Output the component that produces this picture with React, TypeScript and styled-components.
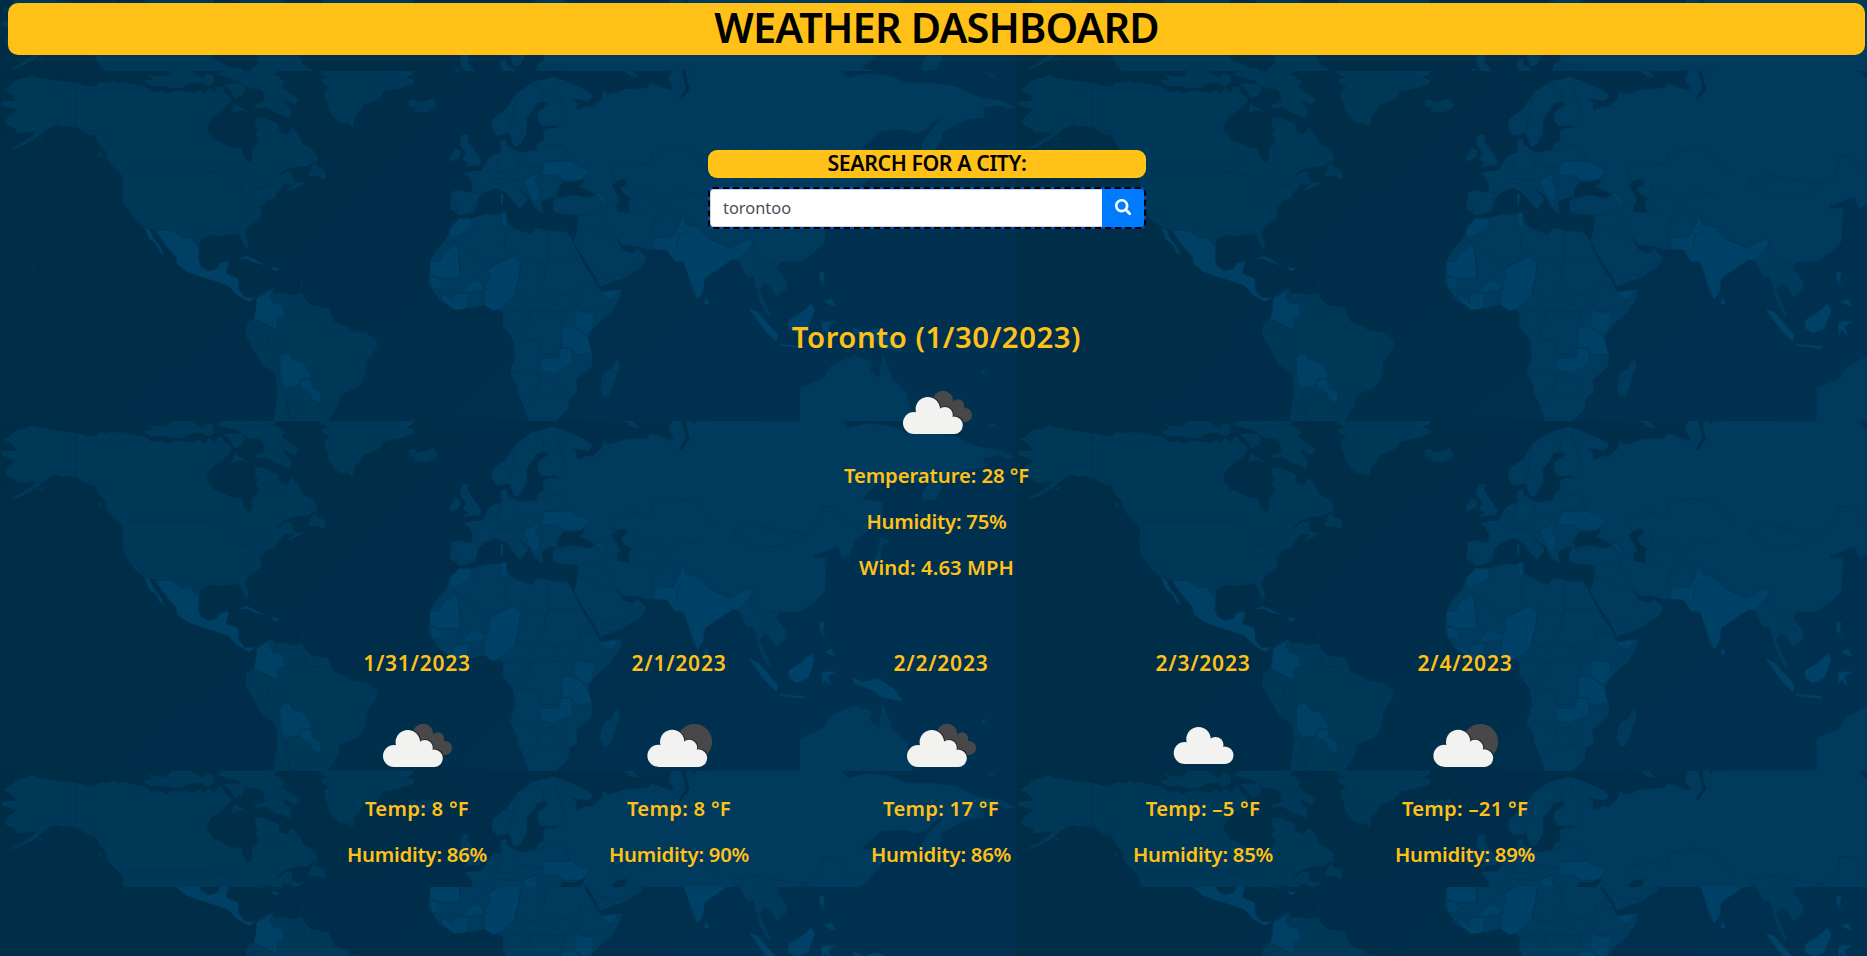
import React, { useId } from "react";
import styled, { createGlobalStyle } from "styled-components";
import { FaSearch } from "react-icons/fa";

const GlobalStyle = createGlobalStyle`
  * { box-sizing: border-box; }
  body { margin: 0; background: #002d48; }
`;

const GOLD = "#ffc117";
const DISPLAY = `"Noto Sans", "Open Sans", sans-serif`;

/* ---------- world map backdrop ---------- */

const TILE_W = 1016.5;
const TILE_H = 350;

const strips = [
  { y: 0, height: 71, from: 9 },
  { y: 71, height: 350, from: 0 },
  { y: 421, height: 350, from: 0 },
  { y: 771, height: 116, from: 0 },
  { y: 887, height: 69, from: 192 },
];

const americas = [
  "M10,88 L30,78 L45,62 L62,56 L80,54 L95,45 L112,52 L160,60 L215,67 L245,73 L268,80 L288,76 L300,66 L320,70 L340,62 L350,70 L370,66 L390,72 L430,78 L445,86 L455,96 L480,92 L500,102 L520,94 L560,94 L580,98 L600,88 L612,102 L625,84 L638,92 L645,100 L652,80 L668,80 L674,100 L690,108 L695,122 L670,148 L655,158 L635,175 L622,195 L622,215 L634,222 L640,238 L662,244 L680,255 L695,262 L725,263 L728,285 L745,306 L756,300 L758,285 L754,268 L775,250 L776,238 L765,225 L775,210 L765,195 L765,175 L790,170 L800,177 L825,187 L838,195 L836,210 L850,222 L862,222 L878,202 L888,215 L905,240 L908,252 L935,266 L950,282 L953,300 L935,310 L920,318 L880,322 L850,332 L825,358 L860,335 L875,335 L880,362 L895,368 L915,365 L900,378 L870,390 L862,388 L880,374 L850,372 L845,385 L830,398 L825,415 L800,420 L790,435 L778,438 L785,460 L780,475 L745,500 L735,520 L745,545 L745,560 L738,570 L722,535 L718,525 L700,522 L665,528 L640,524 L610,532 L600,542 L598,562 L583,558 L565,530 L548,535 L515,510 L480,514 L432,500 L405,480 L385,452 L372,435 L368,400 L370,350 L335,315 L322,300 L315,270 L300,258 L285,228 L258,222 L235,205 L210,198 L190,200 L170,195 L150,202 L130,215 L110,235 L80,250 L60,262 L25,270 L70,245 L100,225 L108,214 L80,218 L50,218 L50,208 L18,195 L15,185 L22,172 L50,150 L30,145 L5,136 L5,124 L48,122 L42,108 Z",
  "M430,62 L460,58 L440,40 L465,48 L500,50 L515,33 L575,33 L600,50 L620,66 L590,68 L560,74 L550,84 L520,85 L490,78 L450,78Z",
  "M650,45 L665,33 L830,33 L820,45 L835,50 L855,65 L845,78 L853,88 L898,118 L885,135 L855,120 L850,125 L875,150 L870,178 L850,165 L830,162 L800,140 L765,144 L765,134 L795,125 L790,100 L780,88 L745,85 L715,62Z",
  "M608,55 L620,38 L640,45 L643,68 L625,80 L610,75Z M668,72 L725,70 L735,85 L728,105 L705,115 L690,90Z M702,130 L745,157 L720,150 L695,160Z",
  "M957,38 L970,33 L1230,33 L1212,46 L1243,62 L1240,72 L1200,85 L1150,95 L1145,108 L1130,120 L1090,135 L1080,155 L1065,168 L1058,203 L1045,190 L1020,190 L1000,170 L986,150 L982,130 L972,105 L975,90 L990,80 L965,68 L965,58 L985,52Z",
  "M1225,120 L1245,118 L1250,128 L1290,118 L1300,115 L1312,135 L1300,150 L1270,158 L1240,152 L1246,140 L1228,140Z",
  "M925,345 L935,318 L950,305 L948,318 L975,330 L978,352 L970,358 L955,348 L925,348Z M295,278 L305,280 L308,292 L298,290Z M108,240 L130,230 L125,240Z",
  "M770,715 L785,700 L820,685 L822,700 L850,698 L880,706 L905,700 L918,722 L935,735 L985,745 L1003,785 L1045,802 L1055,812 L1100,818 L1130,840 L1132,860 L1100,905 L1098,940 L1085,972 L1070,985 L1050,992 L1020,1005 L1015,1035 L985,1083 L820,1083 L826,1040 L832,1000 L828,945 L785,912 L765,875 L737,828 L740,790 L765,770 L768,740Z",
];
const americasBright = [
  "M432,500 L450,508 L462,535 L482,560 L495,590 L478,575 L465,550 L448,540Z",
  "M465,512 L515,510 L548,535 L565,530 L598,562 L596,600 L604,620 L625,632 L650,626 L660,608 L688,603 L678,640 L715,655 L717,690 L735,712 L770,712 L745,726 L710,705 L685,678 L640,662 L605,652 L560,635 L530,612 L528,592 L500,560Z",
  "M770,715 L805,695 L820,683 L808,708 L820,728 L850,735 L852,770 L832,775 L832,810 L800,795 L762,775 L768,740Z",
  "M840,888 L868,875 L875,895 L912,910 L935,945 L932,956 L905,958 L895,978 L855,985 L846,965 L840,945Z",
  "M900,960 L932,958 L940,985 L965,995 L960,1030 L938,1020 L930,1000 L898,980Z",
  "M708,598 L740,588 L765,598 L795,616 L765,608 L740,597Z M815,620 L843,628 L820,634Z M765,630 L780,632 L768,634Z M903,655 L908,675 L904,680Z M98,614 L106,620 L100,624Z M755,560 L768,580 L762,576Z M1215,645 L1222,652 L1216,655Z",
];
const americasLines =
  "M383,333 H620 L680,342 L712,358 L728,378 L722,410 L760,390 L800,378 L830,370 M226,70 V198 L258,222 L272,210 L300,235 M742,820 L775,800 L800,795 M832,825 L805,832 L802,865 L830,870 L842,885 M855,780 L880,762 L912,740 L920,770 L980,770 M855,985 L870,1083 M940,1050 L965,1030";

const oldWorld = [
  "M180,232 L185,210 L208,208 L202,225 L212,240 L235,272 L243,285 L240,300 L185,306 L205,296 L188,280 L200,265 L185,248Z M150,272 L168,250 L183,258 L178,278 L150,290Z",
  "M155,380 L175,376 L215,383 L218,355 L205,335 L192,325 L222,318 L245,318 L258,295 L270,275 L290,266 L305,262 L300,232 L318,220 L322,240 L345,255 L362,262 L410,255 L412,238 L432,225 L428,200 L440,190 L475,188 L470,182 L425,183 L412,165 L415,140 L445,120 L440,108 L412,115 L400,135 L380,160 L380,205 L360,240 L342,245 L328,205 L290,212 L275,190 L278,162 L320,130 L350,85 L400,50 L460,35 L490,45 L560,75 L580,92 L565,107 L515,100 L530,112 L530,135 L545,130 L560,122 L575,125 L605,100 L610,75 L622,88 L640,85 L680,72 L740,70 L755,55 L790,68 L815,76 L822,70 L805,45 L815,18 L1325,18 L1345,38 L1400,25 L1450,30 L1480,35 L1520,55 L1610,55 L1672,65 L1720,90 L1750,98 L1800,105 L1848,128 L1820,130 L1795,120 L1750,130 L1752,158 L1700,165 L1670,178 L1625,205 L1628,215 L1608,255 L1565,258 L1565,235 L1590,200 L1630,157 L1598,172 L1580,195 L1550,205 L1510,195 L1445,198 L1385,250 L1450,262 L1445,300 L1400,350 L1365,378 L1350,420 L1325,430 L1315,395 L1240,422 L1240,430 L1280,430 L1275,530 L1240,565 L1200,590 L1140,590 L1130,610 L1160,650 L1160,670 L1130,697 L1110,665 L1095,655 L1078,675 L1112,750 L1105,755 L1080,710 L1060,635 L1040,637 L1015,585 L995,585 L915,640 L910,680 L892,705 L878,680 L850,590 L825,592 L800,555 L740,553 L715,545 L668,540 L640,508 L668,555 L700,565 L712,550 L740,580 L725,605 L670,640 L600,665 L590,640 L545,570 L522,530 L530,500 L538,450 L490,448 L460,440 L458,415 L470,395 L445,400 L425,410 L430,448 L405,430 L390,398 L335,355 L385,402 L360,435 L320,385 L290,368 L258,380 L235,400 L225,440 L180,452 L150,430Z",
  "M178,460 L215,460 L255,448 L300,447 L318,442 L322,470 L345,492 L395,508 L410,488 L450,498 L500,500 L512,515 L530,555 L548,590 L580,640 L605,685 L665,672 L660,700 L635,740 L600,770 L575,798 L565,820 L578,870 L575,905 L528,945 L532,985 L508,998 L505,1030 L470,1068 L385,1068 L370,1020 L355,990 L350,960 L330,920 L347,870 L340,825 L308,782 L310,745 L300,735 L280,738 L250,720 L210,730 L165,735 L120,705 L85,655 L90,590 L105,560 L140,520 L150,485Z",
  "M652,880 L660,905 L650,930 L630,990 L610,995 L600,965 L610,925 L635,910Z",
  "M1200,1068 L1200,970 L1270,940 L1290,905 L1320,890 L1360,870 L1420,890 L1410,915 L1437,940 L1448,865 L1465,905 L1475,940 L1520,985 L1540,1068Z",
  "M1345,485 L1400,455 L1420,440 L1435,400 L1440,365 L1470,380 L1445,395 L1442,440 L1400,465Z M1760,25 L1790,28 L1775,36Z",
  "M0,18 L42,18 L35,30 L0,40Z M670,18 L700,18 L716,38 L695,36Z",
];
const oldWorldBright = [
  "M178,460 L215,460 L215,490 L155,522 L148,505 L155,485Z",
  "M90,590 L120,588 L130,560 L155,548 L155,530 L175,555 L182,640 L110,640 L90,628Z",
  "M90,640 L110,632 L130,665 L95,672Z",
  "M265,610 L340,572 L362,595 L358,640 L348,665 L345,690 L310,725 L280,738 L252,720 L258,660 L270,640Z",
  "M120,700 L135,690 L160,712 L160,690 L205,685 L200,730 L165,735Z",
  "M188,678 L210,652 L230,645 L262,672 L200,684Z",
  "M485,785 L520,785 L562,815 L575,865 L530,870 L515,850 L490,845 L482,815Z",
  "M525,735 L582,745 L578,790 L560,810 L522,780Z M600,682 L655,672 L640,703 L610,697Z",
  "M420,880 L475,880 L478,850 L515,850 L518,898 L460,925 L422,915Z",
  "M425,320 L435,290 L515,287 L530,300 L570,315 L545,345 L490,345 L470,328 L430,332Z",
  "M370,345 L420,325 L405,345 L420,375 L415,405 L398,410 L380,372Z M302,445 L320,442 L322,495 L308,480Z",
  "M758,552 L765,520 L820,515 L850,450 L858,480 L890,485 L925,520 L990,550 L1010,540 L1050,520 L1060,535 L1015,585 L995,585 L915,640 L910,680 L892,705 L850,590 L825,590 L800,555Z",
  "M915,695 L928,712 L920,722 L912,715Z M585,385 L600,385 L628,425 L605,410Z",
  "M1045,730 L1075,742 L1135,810 L1130,832 L1095,798Z M1135,835 L1220,845 L1215,852 L1140,842Z",
  "M1165,765 L1200,745 L1235,715 L1245,735 L1225,790 L1190,805 L1165,790Z",
  "M1260,618 L1275,622 L1270,650 L1285,675 L1258,645Z M1272,710 L1295,700 L1308,725 L1290,720Z M1265,770 L1310,768 L1285,785 L1295,815 L1275,795 L1265,815Z",
  "M1356,785 L1390,800 L1434,789 L1485,822 L1510,860 L1450,850 L1415,825 L1360,805Z",
  "M1742,920 L1765,908 L1750,926Z M1640,920 L1655,935Z M302,385 L310,388 L308,422 L302,420Z",
];
const oldWorldSeas = [
  "M470,378 L490,350 L525,352 L555,338 L548,358 L535,362 L585,388 L570,400 L520,390 L475,400Z",
  "M635,360 L655,345 L682,342 L680,358 L662,370 L672,388 L695,400 L685,412 L690,445 L652,438 L650,420 L662,405Z",
  "M845,18 L858,18 L862,50 L870,70 L845,105 L838,102 L858,70Z",
  "M1385,18 L1415,18 L1400,26Z M880,18 L888,18 L884,28Z",
];
const oldWorldLines =
  "M155,522 L265,610 L320,575 M318,500 L312,545 L330,575 M443,500 V600 L362,578 M443,583 H540 M182,640 L175,555 M435,600 V640 L420,660 L440,695 L500,690 L535,680 L540,650 L600,660 M362,595 L350,690 L400,700 L430,680 M310,745 L360,735 L375,770 L350,800 M385,740 L490,740 L485,800 L480,870 L420,870 L415,825 L365,825 L370,790 L390,770Z M330,920 L420,925 L410,1000 L380,1030 M405,960 L460,935 L500,980 L470,990 L440,995 L412,1000 M520,700 L545,740 L600,730 L640,705 M460,690 L490,740 L520,730 M350,80 L340,140 L330,190 M400,55 L432,75 L430,110 M460,50 L480,100 L498,155 L478,185 M480,60 L500,50 M412,255 L450,240 L490,240 L510,285 L435,290 M350,262 L355,300 L430,310 M305,262 L285,320 L340,325 M218,383 L255,385 M285,340 L340,345 L370,345 M160,400 L172,440 M630,310 L690,290 L750,300 L755,265 L830,250 L885,262 L920,300 L950,330 M630,310 L645,345 M705,360 V390 L760,400 L820,440 L765,460 L750,520 L768,545 M720,365 L800,400 L830,380 L900,385 M690,400 L730,450 M545,450 L605,445 L640,510 M535,490 L565,492 L640,530 M600,625 L670,630 L680,610 L725,590 M620,420 L610,450 M850,450 L880,480 L925,490 M830,560 L835,510 L860,500 M925,520 L990,545 M1060,530 L1050,560 L1070,600 L1130,590 M1080,640 L1100,610 L1140,650 M1000,345 L1060,330 L1130,345 L1220,355 L1180,385 L1080,400 L1010,370Z M1220,355 L1260,330 L1270,275 L1310,275 L1335,320 L1380,335";

const Backdrop = styled.svg`
  position: absolute;
  inset: 0;
  width: 1867px;
  height: 956px;
  z-index: -1;
`;

function WorldMapBackdrop() {
  return (
    <Backdrop viewBox="0 0 1867 956" aria-hidden="true">
      <defs>
        <linearGradient id="ocean" x1="0" y1="0" x2="1" y2="0.35">
          <stop offset="0" stopColor="#002d46" />
          <stop offset="0.5" stopColor="#002e4a" />
          <stop offset="1" stopColor="#003151" />
        </linearGradient>
        <g id="world">
          <rect width={TILE_W} height={TILE_H} fill="url(#ocean)" />
          <g transform="scale(0.33333) translate(0 -33)">
            <path d={americas.join(" ")} fill="#003858" />
            <path d={americasBright.join(" ")} fill="#004065" stroke="#00314e" strokeWidth="1.5" />
            <path d={americasLines} fill="none" stroke="#00304c" strokeWidth="2" />
          </g>
          <g transform="scale(0.33333) translate(1200 -18)">
            <path d={oldWorld.join(" ")} fill="#003b5d" />
            <path d={oldWorldBright.join(" ")} fill="#004168" stroke="#00334f" strokeWidth="1.5" />
            <path d={oldWorldSeas.join(" ")} fill="#002e49" />
            <path d={oldWorldLines} fill="none" stroke="#003251" strokeWidth="2" />
          </g>
        </g>
      </defs>
      {strips.map((s) =>
        [0, TILE_W].map((x) => (
          <svg
            key={`${s.y}-${x}`}
            x={x}
            y={s.y}
            width={TILE_W}
            height={s.height}
            viewBox={`0 ${s.from} ${TILE_W} ${s.height}`}
          >
            <use href="#world" />
          </svg>
        ))
      )}
    </Backdrop>
  );
}

/* ---------- weather icons ---------- */

type Sky = "scattered" | "broken" | "few";

const FrontCloud = ({ dx = 0, dy = 0, fill }: { dx?: number; dy?: number; fill: string }) => (
  <g transform={`translate(${dx} ${dy})`} fill={fill}>
    <circle cx="27" cy="60" r="11" />
    <circle cx="40.8" cy="46.2" r="12.2" />
    <circle cx="57.8" cy="52" r="8" />
    <circle cx="67" cy="62.3" r="8.8" />
    <path d="M27 52H60L68 62V71.1H27Z" />
  </g>
);

const RearCloud = () => (
  <>
    <circle cx="56" cy="38" r="10.2" />
    <circle cx="71" cy="42.3" r="6" />
    <circle cx="78" cy="52" r="7.1" />
    <path d="M56 38L66 38L71 42L77 43L78 59L60 56Z" />
  </>
);

const IconBox = styled.svg`
  display: block;
  width: 100px;
  height: 100px;
`;

function WeatherIcon({ sky }: { sky: Sky }) {
  const clip = useId();
  if (sky === "scattered") {
    return (
      <IconBox viewBox="0 0 100 100">
        <FrontCloud dx={4.7} dy={-3} fill="#f2f2f1" />
      </IconBox>
    );
  }
  const shift = sky === "few" ? 2.4 : 0;
  const rear = sky === "few" ? <circle cx="65.5" cy="45.7" r="17.7" /> : <RearCloud />;
  return (
    <IconBox viewBox="0 0 100 100">
      <clipPath id={clip}>{rear}</clipPath>
      <g fill="#48484a">{rear}</g>
      <g clipPath={`url(#${clip})`}>
        <FrontCloud dx={shift + 0.8} dy={-0.8} fill="#222224" />
      </g>
      <FrontCloud dx={shift} dy={sky === "few" ? -0.2 : 0} fill="#f2f2f1" />
    </IconBox>
  );
}

/* ---------- page ---------- */

const Page = styled.div`
  position: relative;
  z-index: 0;
  display: flex;
  flex-direction: column;
  align-items: center;
  height: 956px;
  padding: 3px 2px 0 8px;
  font-family: ${DISPLAY};
  color: ${GOLD};
`;

const Banner = styled.header`
  align-self: stretch;
  height: 52px;
  border-radius: 10px;
  background: ${GOLD};
  text-align: center;
`;

const Title = styled.h1`
  margin: 0;
  font-size: 41.5px;
  line-height: 49px;
  font-weight: 600;
  letter-spacing: -0.85px;
  color: #000;
`;

const SearchForm = styled.form`
  width: 438px;
  margin: 95px 19px 0 0;
`;

const SearchLabel = styled.label`
  display: block;
  height: 28px;
  margin-bottom: 9px;
  border: 2px dashed #ffcb12;
  border-radius: 9px;
  background: ${GOLD};
  text-align: center;
  font-size: 21.3px;
  line-height: 22px;
  font-weight: 600;
  letter-spacing: -0.42px;
  color: #000;
`;

const InputGroup = styled.div`
  display: flex;
  height: 42px;
  border: 2px dashed #000;
  border-radius: 5px;
  background: #0b47b0;
`;

const CityInput = styled.input`
  flex: 1;
  min-width: 0;
  padding: 5px 12px 7px;
  border: 1px solid #ced4da;
  border-right: 0;
  border-radius: 4px 0 0 4px;
  outline: 0;
  background: #fff;
  font-family: ${DISPLAY};
  font-size: 16.4px;
  color: #495057;
`;

const SearchButton = styled.button`
  display: flex;
  align-items: center;
  justify-content: center;
  width: 42px;
  padding: 0 0 2px;
  border: 0;
  border-radius: 0 4px 4px 0;
  background: #007bff;
  color: #fff;
  font-size: 16.5px;
`;

const Current = styled.section`
  display: flex;
  flex-direction: column;
  align-items: center;
  margin-top: 90px;

  & > svg { margin-left: 1px; }
`;

const CityHeading = styled.h2`
  margin: 0 0 8px;
  font-size: 29.3px;
  line-height: 36px;
  font-weight: 600;
  letter-spacing: 0.55px;
`;

const Readings = styled.div`
  display: flex;
  flex-direction: column;
  align-items: center;
  gap: 20px;
  margin: -1px 0 1px;
`;

const Reading = styled.p<{ $spacing?: number }>`
  margin: 0;
  font-size: 20.3px;
  line-height: 26px;
  font-weight: 600;
  white-space: nowrap;
  letter-spacing: ${(p) => p.$spacing ?? 0}px;
`;

const Forecast = styled.section`
  display: grid;
  grid-template-columns: repeat(5, 262px);
  margin: 69px 0 0 9px;
`;

const Day = styled.article`
  display: flex;
  flex-direction: column;
  align-items: center;
`;

const DayTitle = styled.h3`
  margin: 0 0 20px;
  font-size: 21px;
  line-height: 26px;
  font-weight: 600;
  letter-spacing: 0.75px;
`;

const days: { date: string; sky: Sky; temp: string; humidity: number }[] = [
  { date: "1/31/2023", sky: "broken", temp: "8", humidity: 86 },
  { date: "2/1/2023", sky: "few", temp: "8", humidity: 90 },
  { date: "2/2/2023", sky: "broken", temp: "17", humidity: 86 },
  { date: "2/3/2023", sky: "scattered", temp: "–5", humidity: 85 },
  { date: "2/4/2023", sky: "few", temp: "–21", humidity: 89 },
];

export default function App() {
  return (
    <>
      <GlobalStyle />
      <Page>
        <WorldMapBackdrop />
        <Banner>
          <Title>WEATHER DASHBOARD</Title>
        </Banner>
        <SearchForm onSubmit={(e) => e.preventDefault()}>
          <SearchLabel htmlFor="city">SEARCH FOR A CITY:</SearchLabel>
          <InputGroup>
            <CityInput id="city" defaultValue="torontoo" />
            <SearchButton aria-label="Search">
              <FaSearch />
            </SearchButton>
          </InputGroup>
        </SearchForm>
        <Current>
          <CityHeading>Toronto (1/30/2023)</CityHeading>
          <WeatherIcon sky="broken" />
          <Readings>
            <Reading $spacing={-0.08}>Temperature: 28 °F</Reading>
            <Reading $spacing={-0.22}>Humidity: 75%</Reading>
            <Reading $spacing={0.08}>Wind: 4.63 MPH</Reading>
          </Readings>
        </Current>
        <Forecast>
          {days.map((d) => (
            <Day key={d.date}>
              <DayTitle>{d.date}</DayTitle>
              <WeatherIcon sky={d.sky} />
              <Readings>
                <Reading $spacing={0.25}>Temp: {d.temp} °F</Reading>
                <Reading $spacing={-0.22}>Humidity: {d.humidity}%</Reading>
              </Readings>
            </Day>
          ))}
        </Forecast>
      </Page>
    </>
  );
}
